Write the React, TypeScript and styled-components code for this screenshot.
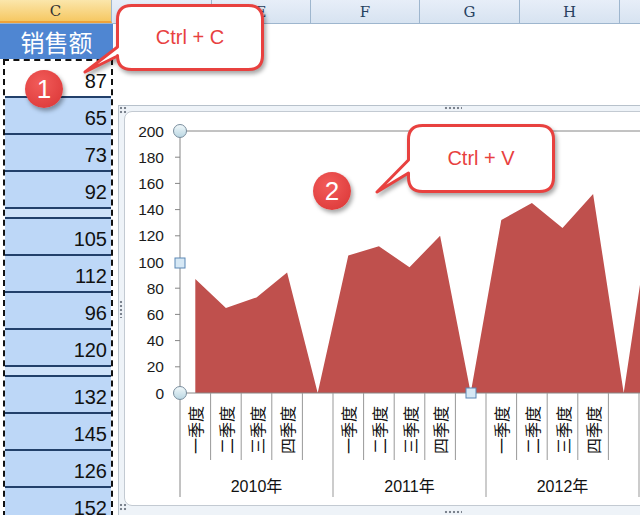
import React from 'react';
import styled, { createGlobalStyle, css } from 'styled-components';

const GlobalStyle = createGlobalStyle`
  html, body {
    margin: 0;
    padding: 0;
    background: #fff;
  }
  body {
    width: 640px;
    height: 515px;
    overflow: hidden;
    font-family: "Liberation Sans", Arial, "Noto Sans CJK SC", sans-serif;
  }
`;

const Sheet = styled.div`
  position: relative;
  width: 640px;
  height: 515px;
  overflow: hidden;
  background: #fff;
`;

const HeaderRow = styled.div`
  display: flex;
  height: 24px;
  box-sizing: border-box;
  border-bottom: 1px solid #9eb6ce;
  background: linear-gradient(#e7eef8, #d7e3f1);
`;

const ColHeader = styled.div<{ $w: number; $active?: boolean }>`
  flex: 0 0 ${p => p.$w}px;
  display: flex;
  align-items: center;
  justify-content: center;
  box-sizing: border-box;
  border-right: 1px solid #9eb6ce;
  font-family: "DejaVu Serif", "Liberation Serif", serif;
  font-size: 15px;
  color: #27415f;
  ${p =>
    p.$active &&
    css`
      background: linear-gradient(#fbe6ab, #f6c863);
      border-bottom: 2px solid #f0a33a;
      color: #333;
    `}
`;

const Body = styled.div`
  display: flex;
`;

const DataColumn = styled.div`
  flex: 0 0 113px;
  display: flex;
  flex-direction: column;
`;

const TitleCell = styled.div`
  height: 35px;
  display: flex;
  align-items: center;
  justify-content: center;
  background: #4f86d2;
  color: #fff;
  font-family: "Noto Sans CJK SC", sans-serif;
  font-size: 24px;
`;

const Range = styled.div`
  margin-left: 3px;
  width: 110px;
  box-sizing: border-box;
  border: 2px dashed #111;
`;

const Cell = styled.div<{ $active?: boolean; $thin?: boolean }>`
  height: ${p => (p.$thin ? 10 : 37)}px;
  box-sizing: border-box;
  border-bottom: 2px solid #22406a;
  background: ${p => (p.$active ? '#fff' : p.$thin ? '#cfe2f9' : '#bdd7f7')};
  display: flex;
  align-items: center;
  justify-content: flex-end;
  padding: ${p => (p.$thin ? '0' : '6px 4px 0 0')};
  font-size: 20px;
  color: #111;
`;

const RightArea = styled.div`
  flex: 1;
  padding: 81px 0 0 5px;
`;

const ChartFrame = styled.div`
  position: relative;
  width: 670px;
  height: 410px;
  box-sizing: border-box;
  padding: 5px;
  border-top: 1px solid #b7c1cb;
  border-left: 1px solid #b7c1cb;
  background: #eef3f8;
`;

const ChartCard = styled.div`
  height: 395px;
  box-sizing: border-box;
  border: 1px solid #c3cad2;
  border-radius: 8px;
  background: #fff;
  overflow: hidden;
`;

const Grip = styled.span<{ $left: number; $top: number; $w: number; $h: number }>`
  position: absolute;
  left: ${p => p.$left}px;
  top: ${p => p.$top}px;
  width: ${p => p.$w}px;
  height: ${p => p.$h}px;
  background-image: radial-gradient(circle, #7b838e 1px, transparent 1.6px);
  background-size: 4px 4px;
`;

const Bubble = styled.div<{ $x: number; $y: number; $w: number; $h: number }>`
  position: absolute;
  left: ${p => p.$x}px;
  top: ${p => p.$y}px;
  width: ${p => p.$w}px;
  height: ${p => p.$h}px;
  display: flex;
  align-items: center;
  justify-content: center;
  font-size: 20px;
  color: #e8413f;
`;

const BubbleShape = styled.svg`
  position: absolute;
  left: 0;
  top: 0;
  overflow: visible;
  filter: drop-shadow(2px 3px 2px rgba(0, 0, 0, 0.35));
`;

const BubbleText = styled.span`
  position: relative;
`;

const Badge = styled.div<{ $x: number; $y: number }>`
  position: absolute;
  left: ${p => p.$x - 19}px;
  top: ${p => p.$y - 19}px;
  width: 38px;
  height: 38px;
  border-radius: 50%;
  background: radial-gradient(circle at 40% 35%, #f25c5a, #d93434);
  box-shadow: 2px 3px 4px rgba(0, 0, 0, 0.35);
  display: flex;
  align-items: center;
  justify-content: center;
  color: #fff;
  font-size: 26px;
`;

const columns: { label: string; w: number; active?: boolean }[] = [
  { label: 'C', w: 112, active: true },
  { label: 'D', w: 100 },
  { label: 'E', w: 99 },
  { label: 'F', w: 109 },
  { label: 'G', w: 100 },
  { label: 'H', w: 100 },
  { label: '', w: 100 },
];

const rows: (number | null)[] = [87, 65, 73, 92, null, 105, 112, 96, 120, null, 132, 145, 126, 152];

// chart series, blanks plotted as zero
const series = [87, 65, 73, 92, 0, 105, 112, 96, 120, 0, 132, 145, 126, 152, 0, 155];
const X0 = 180;
const BASE = 393;
const CW = 30.6;
const K = 1.31;
const quarters = ['一', '二', '三', '四'];

function bubblePath(w: number, h: number, r: number, tx: number, ty: number, b1: number, b2: number) {
  const a = 1.5;
  const W = w - a;
  const H = h - a;
  return `M${a + r},${a} H${W - r} Q${W},${a} ${W},${a + r} V${H - r} Q${W},${H} ${W - r},${H} H${a + r} Q${a},${H} ${a},${H - r} V${b2} L${tx},${ty} L${a},${b1} V${a + r} Q${a},${a} ${a + r},${a} Z`;
}

function Callout(props: { x: number; y: number; w: number; h: number; tip: [number, number]; base: [number, number]; text: string }) {
  const { x, y, w, h, tip, base, text } = props;
  return (
    <Bubble $x={x} $y={y} $w={w} $h={h}>
      <BubbleShape width={w} height={h}>
        <path
          d={bubblePath(w, h, 14, tip[0], tip[1], base[0], base[1])}
          fill="#fff"
          stroke="#e8413f"
          strokeWidth={3}
          strokeLinejoin="round"
        />
      </BubbleShape>
      <BubbleText>{text}</BubbleText>
    </Bubble>
  );
}

function AreaChart() {
  const pts = series.map((v, i) => [X0 + CW * (i + 0.5), BASE - v * K]);
  const d =
    `M${pts[0][0]},${BASE} ` +
    pts.map(p => `L${p[0].toFixed(1)},${p[1].toFixed(1)}`).join(' ') +
    ` L${pts[pts.length - 1][0]},${BASE} Z`;

  const ticks = [0, 20, 40, 60, 80, 100, 120, 140, 160, 180, 200];

  return (
    <svg width={516} height={393} viewBox="125 112 516 393" style={{ display: 'block' }}>
      <defs>
        <linearGradient id="knob" x1="0" y1="0" x2="0" y2="1">
          <stop offset="0" stopColor="#f2f9fb" />
          <stop offset="1" stopColor="#b9d6e2" />
        </linearGradient>
      </defs>
      <path d={d} fill="#bf504d" />
      <line x1={X0} y1={131} x2={660} y2={131} stroke="#868686" />
      <line x1={X0} y1={131} x2={X0} y2={497} stroke="#868686" />
      <line x1={X0} y1={BASE} x2={660} y2={BASE} stroke="#868686" />
      {ticks.map(v => (
        <g key={v}>
          <line x1={175} y1={BASE - v * K} x2={X0} y2={BASE - v * K} stroke="#868686" />
          <text
            x={164}
            y={BASE - v * K}
            textAnchor="end"
            dominantBaseline="central"
            fontFamily="Liberation Sans, Arial, sans-serif"
            fontSize={15.5}
            fill="#1a1a1a"
          >
            {v}
          </text>
        </g>
      ))}
      {series.map((_, i) => {
        const x = X0 + CW * (i + 1);
        const long = (i + 1) % 5 === 0;
        return <line key={'d' + i} x1={x} y1={BASE} x2={x} y2={long ? 497 : 460} stroke="#999" />;
      })}
      {series.slice(0, 15).map((_, i) =>
        i % 5 === 4 ? null : (
          <text
            key={'q' + i}
            transform={`translate(${X0 + CW * (i + 0.5)},406) rotate(-90)`}
            textAnchor="end"
            dominantBaseline="central"
            fontFamily="Noto Sans CJK SC, sans-serif"
            fontSize={16}
            fill="#111"
          >
            {quarters[i % 5] + '季度'}
          </text>
        )
      )}
      {['2010年', '2011年', '2012年'].map((y, k) => (
        <text
          key={y}
          x={X0 + CW * (k * 5 + 2.5)}
          y={486}
          textAnchor="middle"
          dominantBaseline="central"
          fontFamily="Liberation Sans, Noto Sans CJK SC, sans-serif"
          fontSize={16}
          fill="#111"
        >
          {y}
        </text>
      ))}
      <circle cx={X0} cy={131} r={6.5} fill="url(#knob)" stroke="#7a8e9e" />
      <circle cx={X0} cy={BASE} r={6.5} fill="url(#knob)" stroke="#7a8e9e" />
      <rect x={175} y={258} width={10} height={10} fill="#d6e8f5" stroke="#5b87b5" />
      <rect x={466} y={388} width={10} height={10} fill="#d6e8f5" stroke="#5b87b5" />
    </svg>
  );
}

export default function App() {
  return (
    <Sheet>
      <GlobalStyle />
      <HeaderRow>
        {columns.map((c, i) => (
          <ColHeader key={i} $w={c.w} $active={c.active}>
            {c.label}
          </ColHeader>
        ))}
      </HeaderRow>
      <Body>
        <DataColumn>
          <TitleCell>销售额</TitleCell>
          <Range>
            {rows.map((v, i) =>
              v === null ? (
                <Cell key={i} $thin />
              ) : (
                <Cell key={i} $active={i === 0}>
                  {v}
                </Cell>
              )
            )}
          </Range>
        </DataColumn>
        <RightArea>
          <ChartFrame>
            <ChartCard>
              <AreaChart />
            </ChartCard>
            <Grip $left={0} $top={0} $w={8} $h={8} />
            <Grip $left={325} $top={0} $w={18} $h={4} />
            <Grip $left={0} $top={194} $w={4} $h={18} />
            <Grip $left={0} $top={397} $w={8} $h={8} />
            <Grip $left={325} $top={404} $w={18} $h={4} />
          </ChartFrame>
        </RightArea>
      </Body>
      <Badge $x={44} $y={89}>1</Badge>
      <Callout x={116} y={4} w={148} h={67} tip={[-31, 68]} base={[43, 52]} text="Ctrl + C" />
      <Badge $x={332} $y={191}>2</Badge>
      <Callout x={407} y={124} w={148} h={69} tip={[-30, 68]} base={[36, 49]} text="Ctrl + V" />
    </Sheet>
  );
}
